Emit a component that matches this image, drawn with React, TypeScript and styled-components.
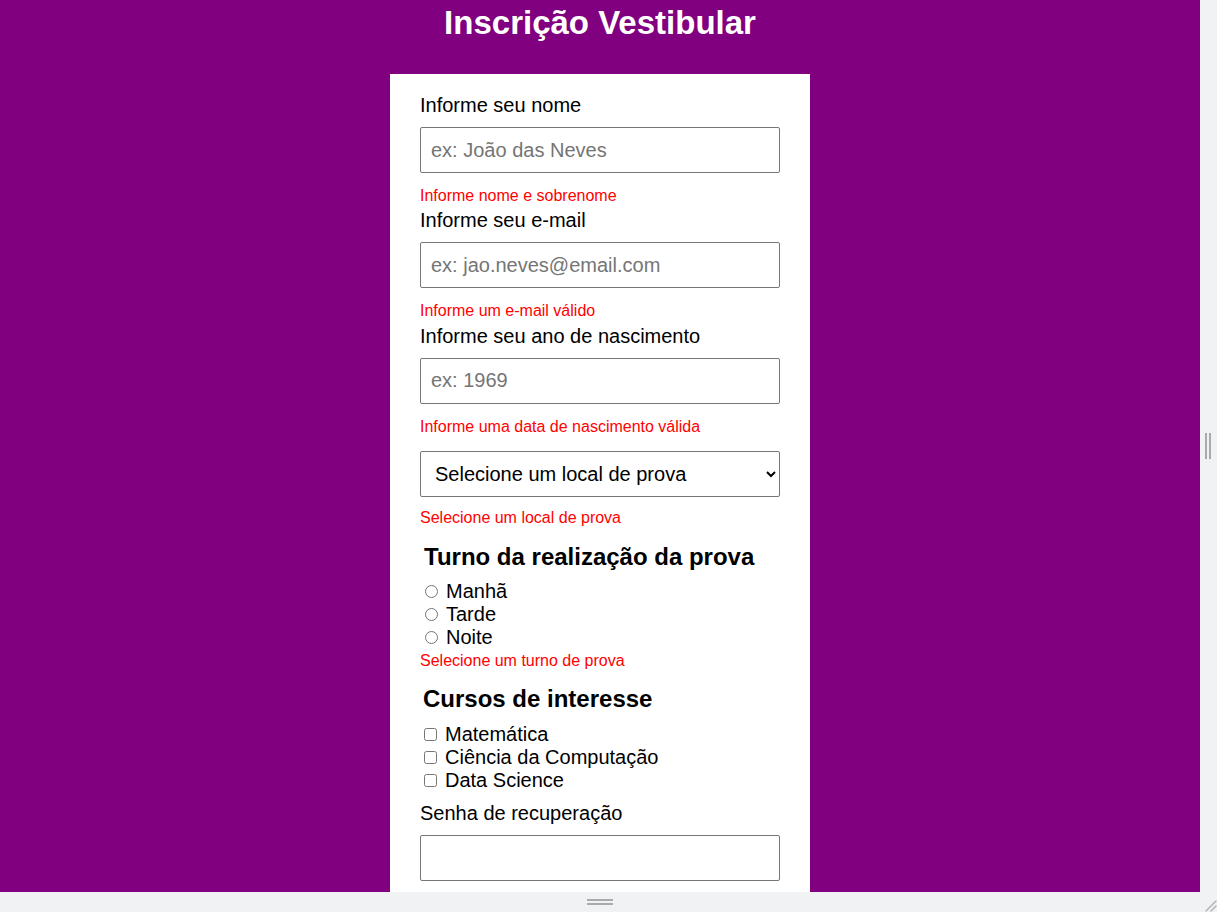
import React from 'react'
import styled, { createGlobalStyle } from 'styled-components'

const GlobalStyle = createGlobalStyle`
	html, body {
		margin:0;
		padding:0;
		background:#f1f2f4;
		overflow:hidden;
	}
	* { box-sizing:border-box; }
`

const S = {
	Shell : styled.div`
		display:grid;
		grid-template-columns:1200px 17px;
		grid-template-rows:892px 20px;
		width:1217px;
		height:912px;
		background:#f1f2f4;
	`,
	Preview : styled.div`
		background:#800080;
		overflow:hidden;
		font-family:"Liberation Sans", Arial, sans-serif;
	`,
	Title : styled.h1`
		margin:0 0 33px;
		padding-top:4px;
		text-align:center;
		color:#fff;
		font-size:33px;
		line-height:37px;
		font-weight:bold;
	`,
	Card : styled.form`
		width:420px;
		margin:0 auto;
		background:#fff;
		padding:20px 30px 40px;
		display:flex;
		flex-direction:column;
	`,
	Label : styled.label<{ top ?: number }>`
		display:block;
		font-size:20px;
		line-height:23px;
		color:#000;
		margin-top:${(p) => p.top ?? 0}px;
		margin-bottom:10px;
	`,
	Input : styled.input`
		width:100%;
		height:46px;
		padding:0 10px;
		font-family:inherit;
		font-size:20px;
		color:#000;
		border:1px solid #767676;
		border-radius:2px;
		background:#fff;
		&::placeholder { color:#757575; }
	`,
	Select : styled.select`
		width:100%;
		height:46px;
		margin-top:11px;
		padding:0 10px;
		font-family:inherit;
		font-size:20px;
		color:#000;
		border:1px solid #767676;
		border-radius:2px;
		background:#fff;
	`,
	Error : styled.span<{ top ?: number; bottom ?: number }>`
		display:block;
		font-size:16px;
		line-height:18.4px;
		color:#ff0000;
		margin-top:${(p) => p.top ?? 14}px;
		margin-bottom:${(p) => p.bottom ?? 4}px;
	`,
	GroupTitle : styled.h3<{ indent : number; top : number; bottom : number }>`
		margin:${(p) => p.top}px 0 ${(p) => p.bottom}px ${(p) => p.indent}px;
		font-size:24px;
		line-height:27.6px;
		font-weight:bold;
		color:#000;
	`,
	Option : styled.label<{ indent : number }>`
		display:flex;
		align-items:center;
		height:23px;
		font-size:20px;
		color:#000;
		input {
			width:13px;
			height:13px;
			margin:0 8px 0 ${(p) => p.indent}px;
		}
	`,
	SideRail : styled.div`
		display:flex;
		align-items:center;
		justify-content:center;
		gap:2px;
		padding-right:1px;
	`,
	BottomRail : styled.div`
		display:flex;
		flex-direction:column;
		align-items:center;
		justify-content:center;
		gap:2px;
	`,
	Corner : styled.div`
		display:flex;
		align-items:flex-end;
		justify-content:flex-end;
	`,
	VBar : styled.span`
		width:2px;
		height:26px;
		background:#a9aaab;
	`,
	HBar : styled.span`
		width:26px;
		height:2px;
		background:#a9aaab;
	`,
}

const turnos = ['Manhã', 'Tarde', 'Noite'];
const cursos = ['Matemática', 'Ciência da Computação', 'Data Science'];

function App() {
	return (
		<>
			<GlobalStyle />
			<S.Shell>
				<S.Preview>
					<S.Title>Inscrição Vestibular</S.Title>
					<S.Card onSubmit={(e) => e.preventDefault()}>
						<S.Label htmlFor="nome">Informe seu nome</S.Label>
						<S.Input id="nome" type="text" placeholder="ex: João das Neves" />
						<S.Error>Informe nome e sobrenome</S.Error>

						<S.Label htmlFor="email">Informe seu e-mail</S.Label>
						<S.Input id="email" type="text" placeholder="ex: jao.neves@email.com" />
						<S.Error>Informe um e-mail válido</S.Error>

						<S.Label htmlFor="ano">Informe seu ano de nascimento</S.Label>
						<S.Input id="ano" type="text" placeholder="ex: 1969" />
						<S.Error>Informe uma data de nascimento válida</S.Error>

						<S.Select defaultValue="">
							<option value="" disabled>Selecione um local de prova</option>
							<option value="sp">São Paulo</option>
							<option value="rj">Rio de Janeiro</option>
						</S.Select>
						<S.Error top={12} bottom={0}>Selecione um local de prova</S.Error>

						<S.GroupTitle indent={4} top={15} bottom={10}>Turno da realização da prova</S.GroupTitle>
						{turnos.map((t) => (
							<S.Option key={t} indent={5}>
								<input type="radio" name="turno" value={t} />
								{t}
							</S.Option>
						))}
						<S.Error top={3} bottom={0}>Selecione um turno de prova</S.Error>

						<S.GroupTitle indent={3} top={14} bottom={11}>Cursos de interesse</S.GroupTitle>
						{cursos.map((c) => (
							<S.Option key={c} indent={4}>
								<input type="checkbox" value={c} />
								{c}
							</S.Option>
						))}

						<S.Label htmlFor="senha" top={10}>Senha de recuperação</S.Label>
						<S.Input id="senha" type="password" />
					</S.Card>
				</S.Preview>
				<S.SideRail>
					<S.VBar />
					<S.VBar />
				</S.SideRail>
				<S.BottomRail>
					<S.HBar />
					<S.HBar />
				</S.BottomRail>
				<S.Corner>
					<svg width="14" height="14" viewBox="0 0 14 14">
						<path d="M13 3 L3 13 M13 8 L8 13" stroke="#b4b5b7" strokeWidth="1.5" strokeLinecap="round" />
					</svg>
				</S.Corner>
			</S.Shell>
		</>
	)
}

export default App;
